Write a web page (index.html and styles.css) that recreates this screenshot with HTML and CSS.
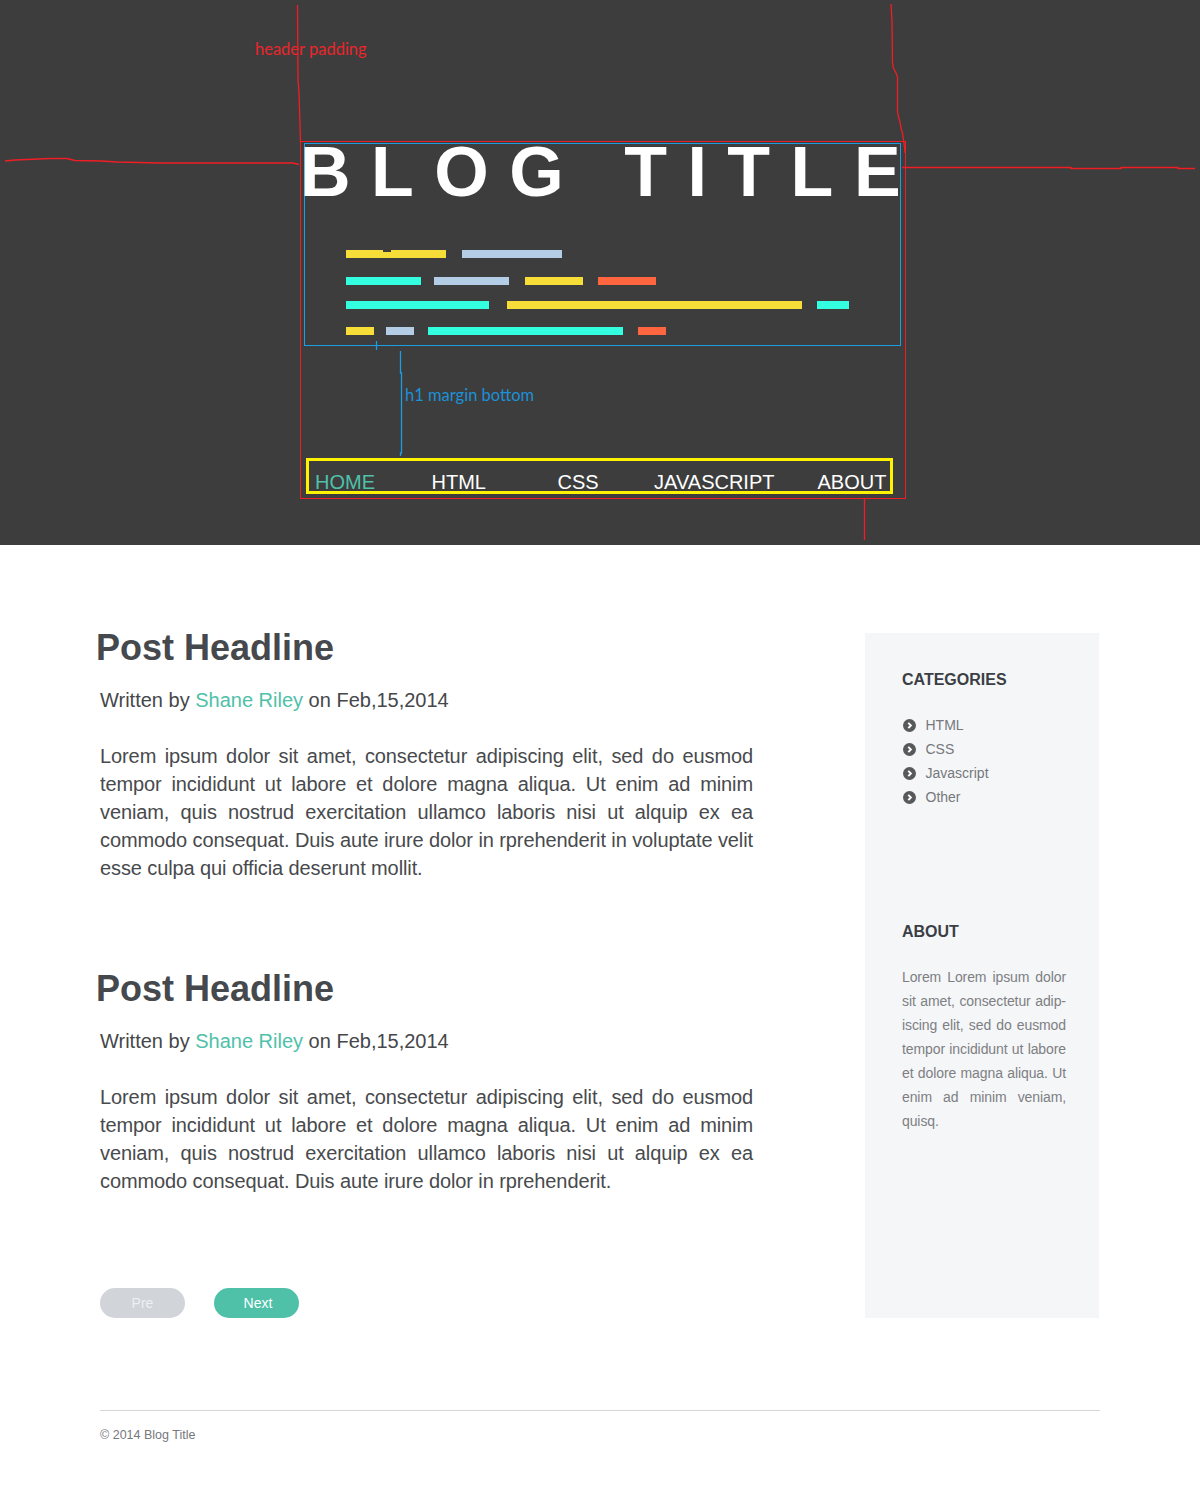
FILE: index.html
```html
<!DOCTYPE html>
<html lang="en">
<head>
<meta charset="utf-8">
<title>Blog Title</title>
<link rel="stylesheet" href="styles.css">
</head>
<body>
<header class="site-header">
  <div class="header-frame">
    <div class="brand">
      <h1 class="brand-title">BLOG TITLE</h1>
      <div class="code">
        <div class="code-row row-1">
          <span class="bar yellow notched" style="width:100px"></span>
          <span class="bar blue" style="width:100px;margin-left:16px"></span>
        </div>
        <div class="code-row row-2">
          <span class="bar cyan" style="width:75px"></span>
          <span class="bar blue" style="width:75px;margin-left:13px"></span>
          <span class="bar yellow" style="width:58px;margin-left:16px"></span>
          <span class="bar orange" style="width:58px;margin-left:15px"></span>
        </div>
        <div class="code-row row-3">
          <span class="bar cyan" style="width:143px"></span>
          <span class="bar yellow" style="width:295px;margin-left:18px"></span>
          <span class="bar cyan" style="width:32px;margin-left:15px"></span>
        </div>
        <div class="code-row row-4">
          <span class="bar yellow" style="width:28px"></span>
          <span class="bar blue" style="width:28px;margin-left:12px"></span>
          <span class="bar cyan" style="width:195px;margin-left:14px"></span>
          <span class="bar orange" style="width:28px;margin-left:15px"></span>
        </div>
      </div>
    </div>
    <nav class="main-nav">
      <ul>
        <li class="active">HOME</li>
        <li>HTML</li>
        <li>CSS</li>
        <li>JAVASCRIPT</li>
        <li>ABOUT</li>
      </ul>
    </nav>
  </div>
  <svg class="annotations" width="1200" height="545" viewBox="0 0 1200 545" aria-hidden="true">
    <g fill="none" stroke="#f01e24" stroke-width="1.3">
      <polyline points="297.5,5 298,80 299,92 300.5,142"/>
      <polyline points="5,161 15,160 50,158.5 67,158.5 75,160.5 101,161 117,162 159,163 293,163 299,164.5"/>
      <polyline points="891,4 892,21 892.5,63 893.5,68 896,73 897.5,77 897.5,112 898.5,117 900,122 901,128 902.5,133 903.5,140 904.5,147 905,153"/>
      <polyline points="902,167.5 1071,167.5 1071,168.5 1121,168.5 1121,167.5 1178,167.5 1178,168.5 1195,168.5"/>
      <polyline points="864.5,499 864.5,540"/>
    </g>
    <g fill="none" stroke="#1d9ee3" stroke-width="1.3">
      <polyline points="376.5,341 376.5,350"/>
      <polyline points="400.5,351 400.5,373 401.5,373 401.5,453 400.5,453 400.5,456"/>
    </g>
  </svg>
  <span class="note note-red">header padding</span>
  <span class="note note-blue">h1 margin bottom</span>
</header>

<div class="page">
  <main class="posts">
    <article class="post">
      <h2 class="post-title">Post Headline</h2>
      <p class="post-meta">Written by <a class="author">Shane Riley</a> on Feb,15,2014</p>
      <p class="post-body">Lorem ipsum dolor sit amet, consectetur adipiscing elit, sed do eusmod tempor incididunt ut labore et dolore magna aliqua. Ut enim ad minim veniam, quis nostrud exercitation ullamco laboris nisi ut alquip ex ea commodo consequat. Duis aute irure dolor in rprehenderit in voluptate velit esse culpa qui officia deserunt mollit.</p>
    </article>
    <article class="post">
      <h2 class="post-title">Post Headline</h2>
      <p class="post-meta">Written by <a class="author">Shane Riley</a> on Feb,15,2014</p>
      <p class="post-body">Lorem ipsum dolor sit amet, consectetur adipiscing elit, sed do eusmod tempor incididunt ut labore et dolore magna aliqua. Ut enim ad minim veniam, quis nostrud exercitation ullamco laboris nisi ut alquip ex ea commodo consequat. Duis aute irure dolor in rprehenderit.</p>
    </article>
    <div class="pager">
      <a class="btn btn-pre">Pre</a>
      <a class="btn btn-next">Next</a>
    </div>
  </main>
  <aside class="sidebar">
    <h3 class="side-title">CATEGORIES</h3>
    <ul class="cat-list">
      <li><svg class="cat-icon" width="13" height="13" viewBox="0 0 13 13"><circle cx="6.5" cy="6.5" r="6.5" fill="#58595b"/><path d="M5.3 3.9 L7.9 6.5 L5.3 9.1" fill="none" stroke="#fff" stroke-width="1.9"/></svg>HTML</li>
      <li><svg class="cat-icon" width="13" height="13" viewBox="0 0 13 13"><circle cx="6.5" cy="6.5" r="6.5" fill="#58595b"/><path d="M5.3 3.9 L7.9 6.5 L5.3 9.1" fill="none" stroke="#fff" stroke-width="1.9"/></svg>CSS</li>
      <li><svg class="cat-icon" width="13" height="13" viewBox="0 0 13 13"><circle cx="6.5" cy="6.5" r="6.5" fill="#58595b"/><path d="M5.3 3.9 L7.9 6.5 L5.3 9.1" fill="none" stroke="#fff" stroke-width="1.9"/></svg>Javascript</li>
      <li><svg class="cat-icon" width="13" height="13" viewBox="0 0 13 13"><circle cx="6.5" cy="6.5" r="6.5" fill="#58595b"/><path d="M5.3 3.9 L7.9 6.5 L5.3 9.1" fill="none" stroke="#fff" stroke-width="1.9"/></svg>Other</li>
    </ul>
    <h3 class="side-title about-title">ABOUT</h3>
    <p class="about-text">Lorem Lorem ipsum dolor sit amet, consectetur adip&shy;iscing elit, sed do eusmod tempor incididunt ut labore et dolore magna aliqua. Ut enim ad minim veniam, quisq.</p>
  </aside>
</div>

<footer class="site-footer">
  <p>© 2014 Blog Title</p>
</footer>
</body>
</html>
```

FILE: styles.css
```css
* {
  box-sizing: border-box;
}

html, body {
  margin: 0;
  padding: 0;
  background: #ffffff;
  font-family: "Liberation Sans", Arial, Helvetica, sans-serif;
}

/* ---------- Header ---------- */
.site-header {
  position: relative;
  height: 545px;
  background: #3d3d3d;
  padding-top: 141px;
}

.header-frame {
  margin-left: 300px;
  width: 606px;
  height: 358px;
  border: 1px solid #f01e24;
}

.brand {
  margin: 1px 0 0 3px;
  width: 597px;
  height: 203px;
  border: 1px solid #1d9ee3;
}

.brand-title {
  margin: 0 0 0 -5px;
  font-size: 70px;
  line-height: 56px;
  font-weight: 700;
  letter-spacing: 20.5px;
  color: #ffffff;
  white-space: nowrap;
}

.code {
  margin: 50px 0 0 41px;
}

.code-row {
  display: flex;
  height: 8px;
}

.row-2 { margin-top: 19px; }
.row-3 { margin-top: 16px; }
.row-4 { margin-top: 18px; }

.bar {
  display: block;
  height: 8px;
  flex: none;
}

.bar.yellow { background: #f6dd38; }
.bar.blue { background: #b3cde7; }
.bar.cyan { background: #33ffe0; }
.bar.orange { background: #ff6640; }

.bar.notched {
  position: relative;
}

.bar.notched::after {
  content: "";
  position: absolute;
  left: 37px;
  top: 0;
  width: 8px;
  height: 2px;
  background: #3d3d3d;
}

.main-nav {
  margin: 112px 0 0 5px;
  width: 587px;
  height: 36px;
  border: 3px solid #fff200;
}

.main-nav ul {
  display: flex;
  margin: 0;
  padding: 11px 0 0 0;
  list-style: none;
}

.main-nav li {
  font-size: 20px;
  line-height: 20px;
  color: #ffffff;
  white-space: nowrap;
}

.main-nav li.active {
  color: #4fc1a9;
}

.main-nav li:nth-child(1) { margin-left: 6px; }
.main-nav li:nth-child(2) { margin-left: 56.5px; }
.main-nav li:nth-child(3) { margin-left: 71.5px; }
.main-nav li:nth-child(4) { margin-left: 55.5px; }
.main-nav li:nth-child(5) { margin-left: 43px; }

.annotations {
  position: absolute;
  left: 0;
  top: 0;
  pointer-events: none;
}

.note {
  position: absolute;
  font-family: Lato, "Open Sans", sans-serif;
  font-size: 16.5px;
  line-height: 20px;
  white-space: nowrap;
}

.note-red {
  left: 255px;
  top: 39px;
  color: #e8262c;
}

.note-blue {
  left: 405px;
  top: 385px;
  color: #1b91d8;
}

/* ---------- Content ---------- */
.page {
  display: flex;
  justify-content: space-between;
  width: 1000px;
  margin: 0 auto;
  padding-top: 83px;
}

.posts {
  width: 653px;
  flex: none;
}

.post + .post {
  margin-top: 87px;
}

.post-title {
  margin: 0 0 0 -4px;
  font-size: 36px;
  line-height: 40px;
  font-weight: 700;
  color: #45484c;
}

.post-meta {
  margin: 18px 0 0 0;
  font-size: 20px;
  line-height: 28px;
  color: #45474a;
}

.author {
  color: #4fc1a9;
  text-decoration: none;
}

.post-body {
  margin: 28px 0 0 0;
  font-size: 20px;
  line-height: 28px;
  letter-spacing: -0.1px;
  text-align: justify;
  color: #484a4d;
}

.pager {
  display: flex;
  gap: 29px;
  margin-top: 93px;
}

.btn {
  display: flex;
  align-items: center;
  justify-content: center;
  width: 85px;
  height: 30px;
  border-radius: 15px;
  font-size: 14px;
  text-decoration: none;
}

.btn-pre {
  background: #d1d4d9;
  color: #eef0f3;
}

.btn-next {
  background: #4fc1a9;
  color: #ffffff;
  padding-left: 3px;
}

/* ---------- Sidebar ---------- */
.sidebar {
  width: 234px;
  flex: none;
  margin: 5px 1px 0 0;
  padding: 37px 33px 0 37px;
  background: #f5f6f8;
}

.side-title {
  margin: 0;
  font-size: 16px;
  line-height: 20px;
  font-weight: 700;
  color: #3b3f45;
}

.cat-list {
  margin: 23px 0 0 0;
  padding: 0;
  list-style: none;
}

.cat-list li {
  display: flex;
  align-items: center;
  height: 24px;
  font-size: 14px;
  line-height: 24px;
  color: #76787c;
}

.cat-icon {
  flex: none;
  margin: 0 10px 0 0.5px;
}

.about-title {
  margin-top: 113px;
}

.about-text {
  margin: 23px 0 0 0;
  font-size: 14px;
  line-height: 24px;
  letter-spacing: -0.1px;
  text-align: justify;
  color: #7d7f83;
}

/* ---------- Footer ---------- */
.site-footer {
  width: 1000px;
  margin: 92px auto 0;
  border-top: 1px solid #d6d6d6;
  padding: 16px 0 52px;
}

.site-footer p {
  margin: 0;
  font-size: 12.5px;
  line-height: 16px;
  color: #76787c;
}
```
